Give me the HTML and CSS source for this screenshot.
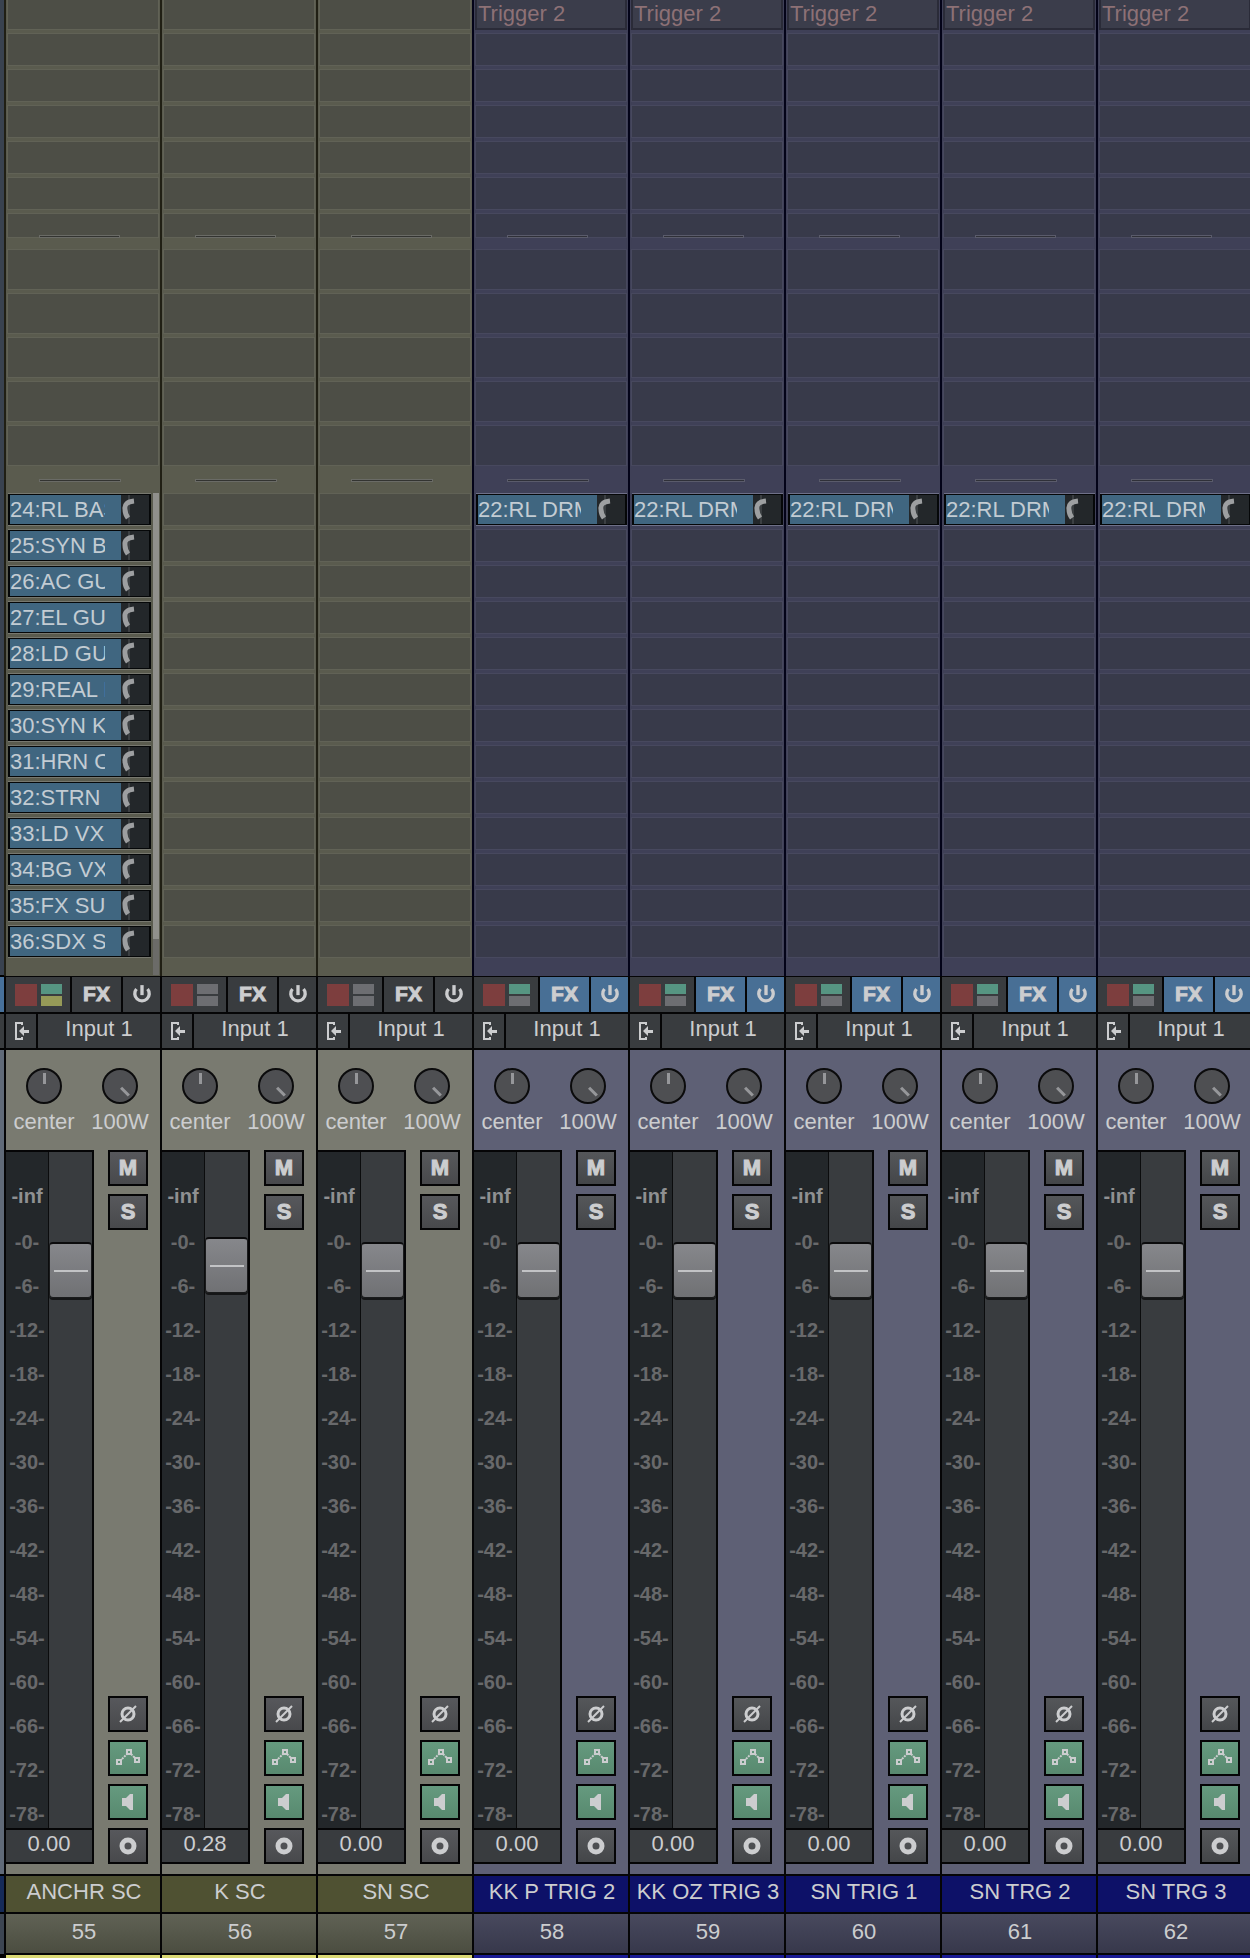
FILE: index.html
```
<!DOCTYPE html>
<html lang="en">
<head>
    <meta charset="UTF-8">
    <meta name="viewport" content="width=device-width, initial-scale=1.0">
    <title>Mixer</title>
    <link rel="stylesheet" href="styles.css">
</head>
<body>
    <main class="mixer" id="mixer">
        <div class="edge">
            <div class="edge-inserts"></div>
            <div class="edge-fx"></div>
            <div class="edge-input"></div>
            <div class="edge-panel"></div>
            <div class="edge-name"></div>
            <div class="edge-number"></div>
        </div>
    </main>

    <script>
        const busSends = ['24:RL BASS', '25:SYN BASS', '26:AC GUITAR', '27:EL GUITAR', '28:LD GUITAR',
            '29:REAL KEYS', '30:SYN KEYS', '31:HRN ORCH', '32:STRN ORCH', '33:LD VX', '34:BG VX',
            '35:FX SUB', '36:SDX SUB'];
        const drumSend = ['22:RL DRMS'];

        // fader is counted in steps from the bottom of a 620 step travel
        const tracks = [
            { number: 55, name: 'ANCHR SC', theme: 'olive', sends: busSends, volume: '0.00', fader: 530, meters: ['teal', 'yellow'] },
            { number: 56, name: 'K SC', theme: 'olive', sends: [], volume: '0.28', fader: 535, meters: ['', ''] },
            { number: 57, name: 'SN SC', theme: 'olive', sends: [], volume: '0.00', fader: 530, meters: ['', ''] },
            { number: 58, name: 'KK P TRIG 2', theme: 'blue', insert: 'Trigger 2', sends: drumSend, volume: '0.00', fader: 530, meters: ['teal', ''] },
            { number: 59, name: 'KK OZ TRIG 3', theme: 'blue', insert: 'Trigger 2', sends: drumSend, volume: '0.00', fader: 530, meters: ['teal', ''] },
            { number: 60, name: 'SN TRIG 1', theme: 'blue', insert: 'Trigger 2', sends: drumSend, volume: '0.00', fader: 530, meters: ['teal', ''] },
            { number: 61, name: 'SN TRG 2', theme: 'blue', insert: 'Trigger 2', sends: drumSend, volume: '0.00', fader: 530, meters: ['teal', ''] },
            { number: 62, name: 'SN TRG 3', theme: 'blue', insert: 'Trigger 2', sends: drumSend, volume: '0.00', fader: 530, meters: ['teal', ''] }
        ];

        const icons = {
            power: '<svg width="20" height="20" viewBox="0 0 18 18"><path d="M4 4.5a6.5 6.5 0 1 0 10 0" fill="none" stroke="currentColor" stroke-width="3"/><path d="M9 1v9" stroke="currentColor" stroke-width="3"/></svg>',
            input: '<svg width="16" height="20" viewBox="0 0 16 20"><path d="M8 4V2H2v16h6v-2" fill="none" stroke="currentColor" stroke-width="2"/><path d="M5 10l5-5v4h5v3h-5v3z" fill="currentColor"/></svg>',
            phase: '<svg width="18" height="18" viewBox="0 0 18 18"><circle cx="9" cy="9" r="6" fill="none" stroke="currentColor" stroke-width="3"/><path d="M1 17L17 1" stroke="currentColor" stroke-width="2"/></svg>',
            envelope: '<svg width="26" height="18" viewBox="0 0 26 18"><g fill="none" stroke="currentColor" stroke-width="2"><rect x="2" y="11" width="4" height="4"/><rect x="12" y="1" width="4" height="4"/><rect x="20" y="9" width="4" height="4"/><path d="M7 10l5-5M16 5l4 4" stroke-dasharray="2 1"/></g></svg>',
            speaker: '<svg width="12" height="18" viewBox="0 0 12 18"><path d="M0 5h4l4-4h3v16H8l-4-4H0z" fill="currentColor"/></svg>',
            monitor: '<svg width="18" height="18" viewBox="0 0 18 18"><circle cx="9" cy="9" r="6" fill="none" stroke="currentColor" stroke-width="5"/></svg>',
            knob: '<svg width="16" height="29" viewBox="0 0 16 29"><path d="M8 0v29" stroke="#55585a" stroke-width="1"/><path d="M13 6Q3 7 4 14Q4 19 7 23" fill="none" stroke="#9d9fa1" stroke-width="5"/></svg>'
        };

        const slots = (count) => '<div class="slot"></div>'.repeat(count);

        function renderSends(track) {
            const sends = track.sends.map((label) => `
                <button type="button" class="send">
                    <span class="send-name">${label}</span>
                    <span class="send-knob">${icons.knob}</span>
                </button>`).join('');
            const bar = track.sends.length > 12 ? '<div class="scrollbar"><div class="scrollbar-thumb"></div></div>' : '';
            return `
                <div class="sends">
                    <div class="send-list">${sends}${slots(13 - track.sends.length)}</div>
                    ${bar}
                </div>`;
        }

        function renderScale() {
            let marks = '<span class="mark peak">-inf</span>';
            for (let db = 0; db <= 78; db += 6) {
                marks += `<span class="mark">-${db}-</span>`;
            }
            return marks;
        }

        function renderTrack(track) {
            const active = track.insert ? 'active' : '';
            return `
            <section class="track ${track.theme}">
                <div class="rack">
                    <div class="inserts">
                        <div class="slot first ${track.insert ? 'filled' : ''}">${track.insert || ''}</div>
                        ${slots(5)}
                        <div class="slot last"><div class="grip"></div></div>
                    </div>
                    <div class="params">${slots(5)}</div>
                    <div class="divider"><div class="grip"></div></div>
                    ${renderSends(track)}
                </div>

                <div class="strip">
                    <div class="row fx-row">
                        <div class="status">
                            <button type="button" class="arm" aria-label="Record arm"></button>
                            <div class="lights">
                                <span class="light ${track.meters[0]}"></span>
                                <span class="light ${track.meters[1]}"></span>
                            </div>
                        </div>
                        <button type="button" class="fx ${active}">FX</button>
                        <button type="button" class="power ${active}" aria-label="Bypass">${icons.power}</button>
                    </div>
                    <div class="row input-row">
                        <button type="button" class="route" aria-label="Routing">${icons.input}</button>
                        <button type="button" class="input">Input 1</button>
                    </div>

                    <div class="panel">
                        <div class="knobs">
                            <label class="knob-label"><input type="range" class="knob" min="-100" max="100" value="0">center</label>
                            <label class="knob-label"><input type="range" class="knob wide" min="-100" max="100" value="100">100W</label>
                        </div>
                        <div class="channel">
                            <div class="meter">
                                <div class="meter-body">
                                    <div class="scale">${renderScale()}</div>
                                    <input type="range" class="fader" min="0" max="620" value="${track.fader}" aria-label="${track.name} volume">
                                </div>
                                <output class="volume">${track.volume}</output>
                            </div>
                            <div class="buttons">
                                <button type="button" class="btn">M</button>
                                <button type="button" class="btn">S</button>
                                <button type="button" class="btn push" aria-label="Phase">${icons.phase}</button>
                                <button type="button" class="btn on" aria-label="Envelope">${icons.envelope}</button>
                                <button type="button" class="btn on" aria-label="Master send">${icons.speaker}</button>
                                <button type="button" class="btn" aria-label="Monitor">${icons.monitor}</button>
                            </div>
                        </div>
                    </div>
                    <div class="name">${track.name}</div>
                    <div class="number">${track.number}</div>
                    <div class="stripe"></div>
                </div>
            </section>`;
        }

        document.getElementById('mixer').insertAdjacentHTML('beforeend', tracks.map(renderTrack).join(''));
    </script>
</body>
</html>
```
FILE: styles.css
```
* {
    box-sizing: border-box;
    margin: 0;
    padding: 0;
}

body {
    font-family: "Liberation Sans", Arial, sans-serif;
    font-size: 22px;
    line-height: 28px;
    color: #cccdcf;
    background-color: #000000;
    overflow-x: hidden;
}

button {
    font: inherit;
    color: inherit;
    border: none;
    cursor: pointer;
}

svg {
    display: block;
}

.mixer {
    display: grid;
    grid-template-columns: 4px repeat(8, minmax(156px, 1fr));
}

/* Sliver of the track before the first one */
.edge {
    display: flex;
    flex-direction: column;
    gap: 2px;
}

.edge-inserts {
    height: 975px;
    background-color: #39424f;
}

.edge-fx {
    height: 35px;
    background-color: #47709a;
}

.edge-input {
    height: 34px;
    background-color: #393c3f;
}

.edge-panel {
    height: 824px;
    background-color: #606a78;
}

.edge-name {
    height: 36px;
    background-color: #152a58;
}

.edge-number {
    height: 40px;
    background-color: #3c4552;
}

/* Track themes */
.olive {
    --rack: #5a5b4e;
    --slot: #4d4e46;
    --slot-line: #616256;
    --gap: #201f14;
    --panel: #797a70;
    --button-top: #57585c;
    --button-bottom: #48494c;
    --name: #4f5132;
    --number-top: #606255;
    --number-bottom: #4b4d40;
    --stripe: #dad873;
}

.blue {
    --rack: #3f4057;
    --slot: #383a4a;
    --slot-line: #47485e;
    --gap: #030318;
    --panel: #5e6075;
    --button-top: #55575a;
    --button-bottom: #444649;
    --name: #0d1168;
    --number-top: #48495e;
    --number-bottom: #37384b;
    --stripe: #1a1b94;
}

.track {
    min-width: 0;
}

.rack {
    border-left: 2px solid var(--gap);
    background-color: var(--rack);
}

.strip {
    border-left: 2px solid #050506;
}

/* Inserts and sends */
.inserts,
.params,
.send-list {
    display: flex;
    flex-direction: column;
    gap: 3px;
}

.inserts,
.params {
    padding: 0 1px;
}

.inserts {
    margin-bottom: 11px;
}

.slot {
    height: 33px;
    border: 1px solid var(--slot-line);
    background-color: var(--slot);
}

.params .slot {
    height: 41px;
}

.slot.first {
    height: 30px;
    border-top: none;
}

.slot.last {
    display: flex;
    align-items: flex-end;
    height: 25px;
}

.slot.filled {
    padding-left: 1px;
    border: 2px solid #2a2b38;
    border-top: none;
    background-color: #3b3d4b;
    color: #8d7176;
    line-height: 27px;
    white-space: nowrap;
    overflow: hidden;
}

.grip {
    width: 54%;
    height: 3px;
    margin-left: 32px;
    border: 1px solid #6a6b66;
    background-color: #333431;
}

.slot .grip {
    margin-left: 31px;
    margin-bottom: -1px;
}

.blue .grip {
    border-color: #5a5b6b;
    background-color: #2f3038;
}

.divider {
    height: 27px;
    padding: 13px 1px 11px;
}

.sends {
    display: flex;
    gap: 2px;
    height: 483px;
    padding: 0 1px;
}

.send-list {
    flex: 1;
    min-width: 0;
}

.send {
    display: flex;
    height: 31px;
    margin: 1px 0 1px 1px;
    border: 1px solid #050708;
    border-width: 1px 2px;
    box-shadow: 0 1px 0 #77786f, 0 -1px 0 #77786f;
    background-color: #23272a;
    text-align: left;
}

.blue .send {
    box-shadow: 0 1px 0 #6e7088, 0 -1px 0 #6e7088;
}

.send-name {
    flex: 1;
    min-width: 0;
    height: 29px;
    border-right: 16px solid #406680;
    background-color: #406680;
    color: #c3ccd3;
    line-height: 29px;
    white-space: nowrap;
    overflow: hidden;
}

.send-knob {
    width: 28px;
}

.scrollbar {
    width: 6px;
    height: 482px;
    background-color: #6b6b68;
}

.scrollbar-thumb {
    height: 446px;
    background-color: #90908c;
}

/* Button rows */
.row {
    display: flex;
    gap: 2px;
    background-color: #050506;
    border-top: 1px solid #050506;
}

.fx-row {
    height: 36px;
}

.input-row {
    height: 38px;
    padding: 1px 0 2px;
}

.status {
    display: flex;
    align-items: center;
    gap: 4px;
    width: 64px;
    padding-left: 9px;
    background-color: #393c3f;
}

.arm {
    width: 22px;
    height: 22px;
    background-color: #7d3e3e;
}

.lights {
    display: flex;
    flex-direction: column;
    gap: 2px;
}

.light {
    width: 21px;
    height: 10px;
    background-color: #6d6e72;
}

.light.teal {
    background-color: #569582;
}

.light.yellow {
    background-color: #969a58;
}

.fx,
.power,
.route,
.input {
    display: flex;
    align-items: center;
    justify-content: center;
    padding-bottom: 2px;
    background-color: #393c3f;
}

.fx {
    flex: 1;
    font-size: 21px;
    font-weight: bold;
    -webkit-text-stroke: 1px currentColor;
}

.power {
    width: 37px;
}

.fx.active,
.power.active {
    background-color: #486f95;
}

.route {
    width: 30px;
    padding: 0 0 0 2px;
}

.input {
    flex: 1;
    padding-bottom: 4px;
}

/* Panel with knobs and fader */
.panel {
    padding: 18px 0 10px;
    background-color: var(--panel);
}

.knobs {
    display: grid;
    grid-template-columns: 1fr 1fr;
    margin-bottom: 10px;
    padding-right: 2px;
}

.knob-label {
    display: flex;
    flex-direction: column;
    align-items: center;
    line-height: 36px;
}

.knob {
    appearance: none;
    width: 36px;
    height: 36px;
    border: 2px solid #0b0b0c;
    border-radius: 50%;
    background: linear-gradient(#96979a, #96979a) center 3px / 3px 11px no-repeat, #4e4f52;
}

.knob.wide {
    transform: rotate(135deg);
}

.knob::-webkit-slider-thumb {
    appearance: none;
    width: 1px;
    height: 1px;
    opacity: 0;
}

.channel {
    display: flex;
    justify-content: space-between;
    padding-right: 12px;
}

.meter {
    width: 88px;
    border: 2px solid #050506;
    border-left: none;
}

.meter-body {
    display: flex;
}

.scale {
    display: flex;
    flex-direction: column;
    align-items: center;
    gap: 18px;
    width: 42px;
    padding-top: 31px;
    background-color: #23272a;
}

.mark {
    color: #68696b;
    font-size: 20px;
    font-weight: bold;
    line-height: 26px;
}

.mark.peak {
    margin-bottom: 2px;
    color: #8f9092;
}

.fader {
    appearance: none;
    writing-mode: vertical-lr;
    direction: rtl;
    width: 44px;
    height: 676px;
    border-left: 1px solid #0b0c0d;
    background-color: #393c3f;
}

.fader::-webkit-slider-thumb {
    appearance: none;
    width: 43px;
    height: 56px;
    border: 1px solid #1a1b1c;
    border-top: 2px solid #0b0b0c;
    border-radius: 4px;
    background: linear-gradient(#c2c3c5, #c2c3c5) center / 34px 2px no-repeat, linear-gradient(#86878b, #707174);
    box-shadow: 0 2px 0 #151617;
}

.volume {
    display: block;
    height: 34px;
    padding-bottom: 4px;
    border-top: 2px solid #050506;
    background-color: #393c3f;
    text-align: center;
}

.buttons {
    display: flex;
    flex-direction: column;
    gap: 8px;
    width: 40px;
}

.btn {
    display: flex;
    align-items: center;
    justify-content: center;
    height: 36px;
    border: 2px solid #050506;
    background: linear-gradient(var(--button-top), var(--button-bottom));
    font-weight: bold;
    -webkit-text-stroke: 1px currentColor;
}

.btn.push {
    margin-top: auto;
}

.btn.on {
    background: linear-gradient(#659a7f, #58896f);
}

/* Track name and number */
.name,
.number {
    padding-left: 2px;
    border-bottom: 2px solid #050506;
    text-align: center;
    white-space: nowrap;
    overflow: hidden;
}

.name {
    height: 40px;
    padding-top: 1px;
    border-top: 2px solid #050506;
    background-color: var(--name);
    line-height: 30px;
}

.number {
    height: 41px;
    background: linear-gradient(var(--number-top), var(--number-bottom));
    line-height: 35px;
}

.stripe {
    height: 3px;
    background-color: var(--stripe);
}
```
